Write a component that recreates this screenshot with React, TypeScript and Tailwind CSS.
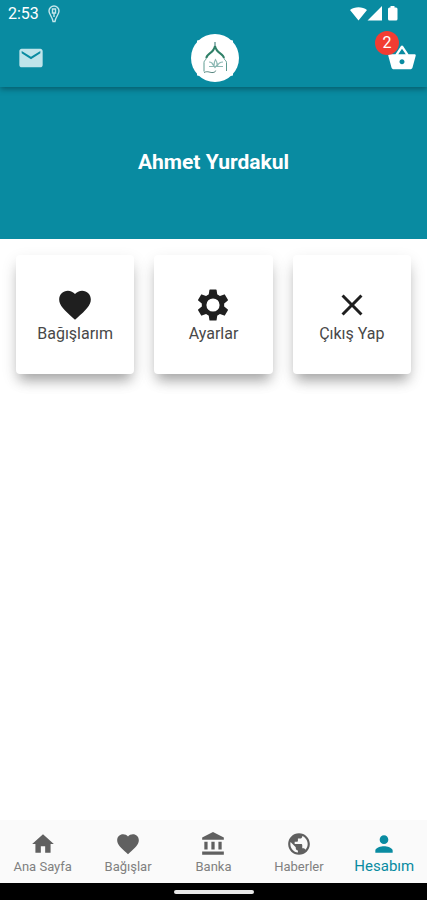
import React from "react";
import {
  MdAccountBalance,
  MdClose,
  MdFavorite,
  MdHome,
  MdMail,
  MdPerson,
  MdPublic,
  MdShoppingBasket,
} from "react-icons/md";
import type { IconType } from "react-icons";

const GearIcon = () => (
  <svg viewBox="0 0 36 36" className="w-9 h-9" fill="currentColor">
    {[0, 60, 120].map((angle) => (
      <path
        key={angle}
        d="M15 2.500h6q.5 0 .6.500l.9 6h-9l.9-6q.1-.5.6-.5zM13.500 27h9l-.9 6q-.1.5-.6.5h-6q-.5 0-.6-.5z"
        transform={`rotate(${angle} 18 18)`}
      />
    ))}
    <path
      fillRule="evenodd"
      d="M18 6.800a11.200 11.200 0 1 0 0 22.400 11.200 11.200 0 0 0 0-22.400zm0 4.600a6.600 6.600 0 1 1 0 13.200 6.600 6.600 0 0 1 0-13.200z"
    />
  </svg>
);

const Logo = () => (
  <svg viewBox="0 0 48 48" className="w-12 h-12" fill="none" role="img">
    <circle cx="24" cy="24" r="24" fill="#fff" />
    <path
      d="M6 10V6.500L9.500 6 12 4zM42 10V6.500L38.500 6 36 4zM6 38v3.500l3.500.5 2.500 2zM42 38v3.500l-3.500.5-2.500 2z"
      fill="#fff"
    />
    <path d="M24 8v6" stroke="#2b6f6a" strokeWidth="1" />
    <path
      d="M24 12c-.6 3.500-2.600 5.500-5.200 7.400-2.300 1.700-3.400 2.900-3.400 4.600M24 12c.6 3.500 2.600 5.500 5.200 7.400 2.300 1.700 3.800 2.900 3.600 4.600"
      stroke="#2f8068"
      strokeWidth="2"
    />
    <path
      d="M15.400 24c-.4 2-2.400 2.600-2.400 4.500v9M32.800 24c.4 2 2.700 2.600 2.700 4.500V37"
      stroke="#5d9a90"
      strokeWidth="1"
    />
    <path
      d="M18 28c2.500 0 4 1.500 5 4 0-3 .5-5 1.500-6.500C25.700 27 26.300 29 26.300 32c1-2.500 2.500-4 5.700-4M18 32.500h14M21 29.500l3 4 3-4"
      stroke="#8db9b4"
      strokeWidth="1.200"
    />
    <path d="M13 38.500c4-2 6 .5 9 0s2-1.500 3-2" stroke="#55847e" strokeWidth="1" />
  </svg>
);

const StatusBar = () => (
  <div className="flex justify-between items-center h-7 pl-2 pr-7">
    <div className="flex items-center gap-2">
      <span className="text-base leading-5">2:53</span>
      {/* Location */}
      <svg viewBox="0 0 14 18" className="w-3.5 h-[18px]" fill="none" stroke="#c5e6eb">
        <path
          d="M7 1a5 5 0 0 0-5 5c0 3.400 3.200 5.400 4 10.500h2C8.800 11.400 12 9.400 12 6a5 5 0 0 0-5-5z"
          strokeWidth="1.400"
        />
        <path d="M5.500 4h3v4h-3zM7 8v4" strokeWidth="1.400" />
      </svg>
    </div>
    {/* Wifi, signal, battery */}
    <svg viewBox="0 0 50 16" className="w-[50px] h-4" fill="#fff">
      <path d="M1 4C5.500.2 13.500.2 18 4L9.500 14.500zM33 0v14.500H18.500zM41.500 0h4v1.500H47a1.500 1.500 0 0 1 1.500 1.500v10a1.500 1.500 0 0 1-1.500 1.500h-6.500A1.500 1.500 0 0 1 39 13V3a1.500 1.500 0 0 1 1.500-1.500h1z" />
    </svg>
  </div>
);

const Header = () => (
  <header className="relative z-10 bg-[#098ba1] text-white shadow-[0_2px_6px_rgba(0,0,0,0.35)]">
    <StatusBar />
    <div className="grid grid-cols-3 items-center h-[59px] pl-3 pr-2.5">
      <button aria-label="Mesajlar" className="justify-self-start p-[5px] text-[#bfe4ea]">
        <MdMail size={28} />
      </button>
      <div className="justify-self-center">
        <Logo />
      </div>
      <button aria-label="Sepet" className="relative justify-self-end">
        <MdShoppingBasket size={30} />
        <span className="absolute -left-3 -top-3 flex items-center justify-center w-6 h-6 rounded-full bg-[#f23c32] text-base leading-5">
          2
        </span>
      </button>
    </div>
  </header>
);

const cards: { label: string; icon: React.ReactNode }[] = [
  { label: "Bağışlarım", icon: <MdFavorite size={38} /> },
  { label: "Ayarlar", icon: <GearIcon /> },
  { label: "Çıkış Yap", icon: <MdClose size={36} /> },
];

const tabs: { label: string; icon: IconType; active?: boolean }[] = [
  { label: "Ana Sayfa", icon: MdHome },
  { label: "Bağışlar", icon: MdFavorite },
  { label: "Banka", icon: MdAccountBalance },
  { label: "Haberler", icon: MdPublic },
  { label: "Hesabım", icon: MdPerson, active: true },
];

const BottomNav = () => (
  <nav className="grid grid-cols-5 h-[63px] bg-[#fafafa]">
    {tabs.map(({ label, icon: Icon, active }) => (
      <a
        key={label}
        href="#"
        className={`flex flex-col items-center pt-[11px] whitespace-nowrap ${active ? "text-[#098ba1] text-[15px] leading-[18px]" : "text-[#808080] text-[13px] leading-5"}`}
      >
        <Icon size={26} className={active ? "" : "text-[#606060]"} />
        {label}
      </a>
    ))}
  </nav>
);

const App: React.FC = () => {
  return (
    <div className="min-h-screen flex flex-col bg-white font-[Roboto,sans-serif]">
      <Header />

      <main className="flex-1">
        <section className="flex items-center justify-center h-[152px] bg-[#098ba1]">
          <h1 className="text-[21px] font-bold text-white">Ahmet Yurdakul</h1>
        </section>

        <div className="grid grid-cols-3 gap-5 px-4 py-4">
          {cards.map((card) => (
            <button
              key={card.label}
              className="flex flex-col items-center justify-center h-[119px] rounded bg-white text-[#1f1f1f] shadow-[0_10px_12px_-4px_rgba(0,0,0,0.28),0_6px_16px_rgba(0,0,0,0.12)]"
            >
              <span className="flex items-center h-[38px]">{card.icon}</span>
              <span className="text-base leading-5 text-[#484848]">{card.label}</span>
            </button>
          ))}
        </div>
      </main>

      <BottomNav />
      {/* Gesture bar */}
      <div className="flex items-center justify-center h-[17px] bg-black">
        <div className="w-20 h-1 rounded-full bg-[#e8e8e8]" />
      </div>
    </div>
  );
};

export default App;
